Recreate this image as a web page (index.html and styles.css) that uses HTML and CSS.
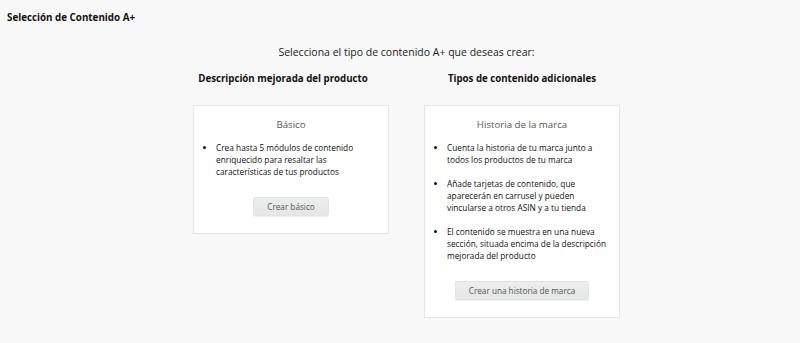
FILE: index.html
```html
<!DOCTYPE html>
<html lang="es">
<head>
  <meta charset="UTF-8" />
  <title>Selección de Contenido A+</title>
  <link rel="stylesheet" href="styles.css">
</head>
<body>
  <h1 class="page-title">Selección de Contenido A+</h1>

  <div class="chooser">
    <p class="chooser-lead">Selecciona el tipo de contenido A+ que deseas crear:</p>

    <div class="columns">
      <div class="column">
        <h2 class="column-title column-title-left">Descripción mejorada del producto</h2>
        <div class="card">
          <h3 class="card-title">Básico</h3>
          <ul class="card-list">
            <li>Crea hasta 5 módulos de contenido enriquecido para resaltar las características de tus productos</li>
          </ul>
          <button class="card-btn">Crear básico</button>
        </div>
      </div>

      <div class="column">
        <h2 class="column-title">Tipos de contenido adicionales</h2>
        <div class="card">
          <h3 class="card-title">Historia de la marca</h3>
          <ul class="card-list">
            <li>Cuenta la historia de tu marca junto a todos los productos de tu marca</li>
            <li>Añade tarjetas de contenido, que aparecerán en carrusel y pueden vincularse a otros ASIN y a tu tienda</li>
            <li>El contenido se muestra en una nueva sección, situada encima de la descripción mejorada del producto</li>
          </ul>
          <button class="card-btn">Crear una historia de marca</button>
        </div>
      </div>
    </div>
  </div>
</body>
</html>
```

FILE: styles.css
```css
body {
  margin: 0;
  padding: 11px 7px;
  background-color: #f8f8f8;
  color: #111;
  font-family: 'Open Sans', 'Noto Sans', sans-serif;
  font-size: 8.3px;
}

.page-title {
  margin: 0;
  font-size: 9.8px;
  font-weight: 700;
  line-height: 14px;
  color: #111;
}

.chooser {
  display: flex;
  flex-direction: column;
  align-items: center;
  padding-left: 13px;
}

.chooser-lead {
  margin: 20px 0 0;
  font-size: 10.5px;
  line-height: 14px;
  color: #222;
}

.columns {
  display: flex;
  gap: 35px;
  margin-top: 13px;
}

.column {
  width: 196px;
  display: flex;
  flex-direction: column;
}

.column-title {
  margin: 0 0 19px;
  font-size: 9.7px;
  font-weight: 700;
  line-height: 14px;
  text-align: center;
  white-space: nowrap;
  color: #111;
}

.column-title-left {
  padding-right: 16px;
}

.card {
  background: #fff;
  border: 1px solid #e3e6e6;
  padding: 12px 10px 17px;
  display: flex;
  flex-direction: column;
  align-items: center;
}

.card-title {
  margin: 0 0 10px;
  font-size: 9.7px;
  font-weight: 400;
  line-height: 14px;
  color: #565959;
}

.card-list {
  margin: 0;
  padding-left: 12px;
  align-self: stretch;
  line-height: 12px;
  color: #111;
}

.card-list li {
  margin-bottom: 12px;
}

.card-list li:last-child {
  margin-bottom: 0;
}

.card-btn {
  margin-top: 19px;
  padding: 3px 13px;
  font-family: inherit;
  font-size: 8.2px;
  font-weight: 400;
  line-height: 11px;
  color: #555;
  background: linear-gradient(#eceeee, #e5e7e7);
  border: 1px solid #e2e4e4;
  border-radius: 2px;
  box-shadow: 0 1px 0 rgba(0, 0, 0, 0.05);
}
```
